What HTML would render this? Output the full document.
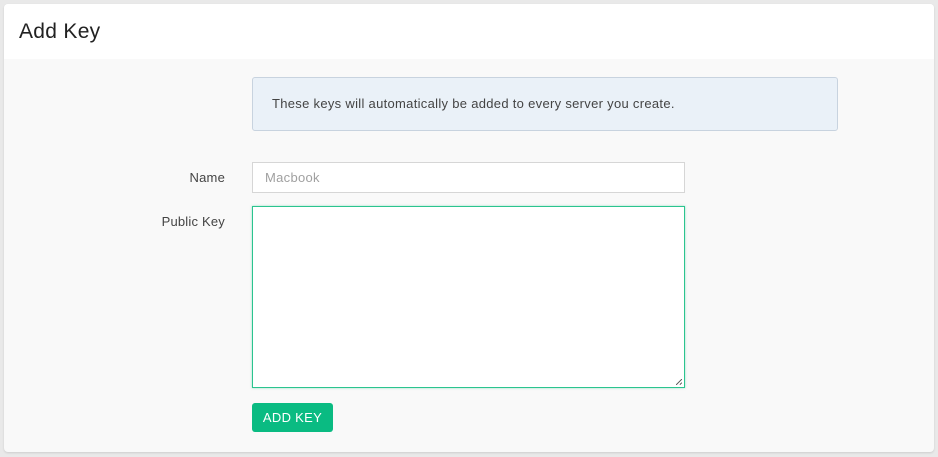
<!DOCTYPE html>
<html><head><style>
*{box-sizing:border-box;margin:0;padding:0}
body{width:938px;height:457px;background:#e9e9e9;font-family:"Liberation Sans",sans-serif;position:relative;overflow:hidden;color:#4a4a4a}
.card{position:absolute;left:4px;top:4px;width:930px;height:448px;background:#f9f9f9;border-radius:4px;overflow:hidden;box-shadow:0 1px 2px rgba(0,0,0,.12)}
.hd{height:55px;background:#fff;padding-left:15px;font-size:21px;line-height:56px;color:#222;letter-spacing:0.3px}
.alert{position:absolute;left:248px;top:73px;width:586px;height:54px;background:#eaf1f8;border:1px solid #c8d3df;border-radius:3px;font-size:13px;line-height:52px;padding-left:19px;color:#444;letter-spacing:0.3px}
.lbl{position:absolute;right:709px;font-size:13px;color:#444;letter-spacing:0.2px}
.inp{position:absolute;left:248px;top:158px;width:433px;height:31px;background:#fff;border:1px solid #d6d6d6;font-size:13px;line-height:29px;padding-left:12px;color:#a0a0a0;letter-spacing:0.3px}
.ta{position:absolute;left:248px;top:202px;width:433px;height:182px;background:#fff;border:1px solid #2bc48f;box-shadow:0 0 2px rgba(43,196,143,.5)}
.ta:after{content:"";position:absolute;right:2px;bottom:2px;width:6px;height:6px;background:linear-gradient(135deg,transparent 45%,#666 45%,#666 55%,transparent 55%,transparent 75%,#666 75%,#666 85%,transparent 85%)}
.btn{position:absolute;left:248px;top:399px;width:81px;height:29px;background:#0abb82;border-radius:3px;color:#fff;font-size:13px;line-height:29px;text-align:center;letter-spacing:0.3px}
</style></head><body>
<div class="card">
<div class="hd">Add Key</div>
<div class="alert">These keys will automatically be added to every server you create.</div>
<div class="lbl" style="top:166px">Name</div>
<div class="inp">Macbook</div>
<div class="lbl" style="top:210px">Public Key</div>
<div class="ta"></div>
<div class="btn">ADD KEY</div>
</div>
</body></html>
